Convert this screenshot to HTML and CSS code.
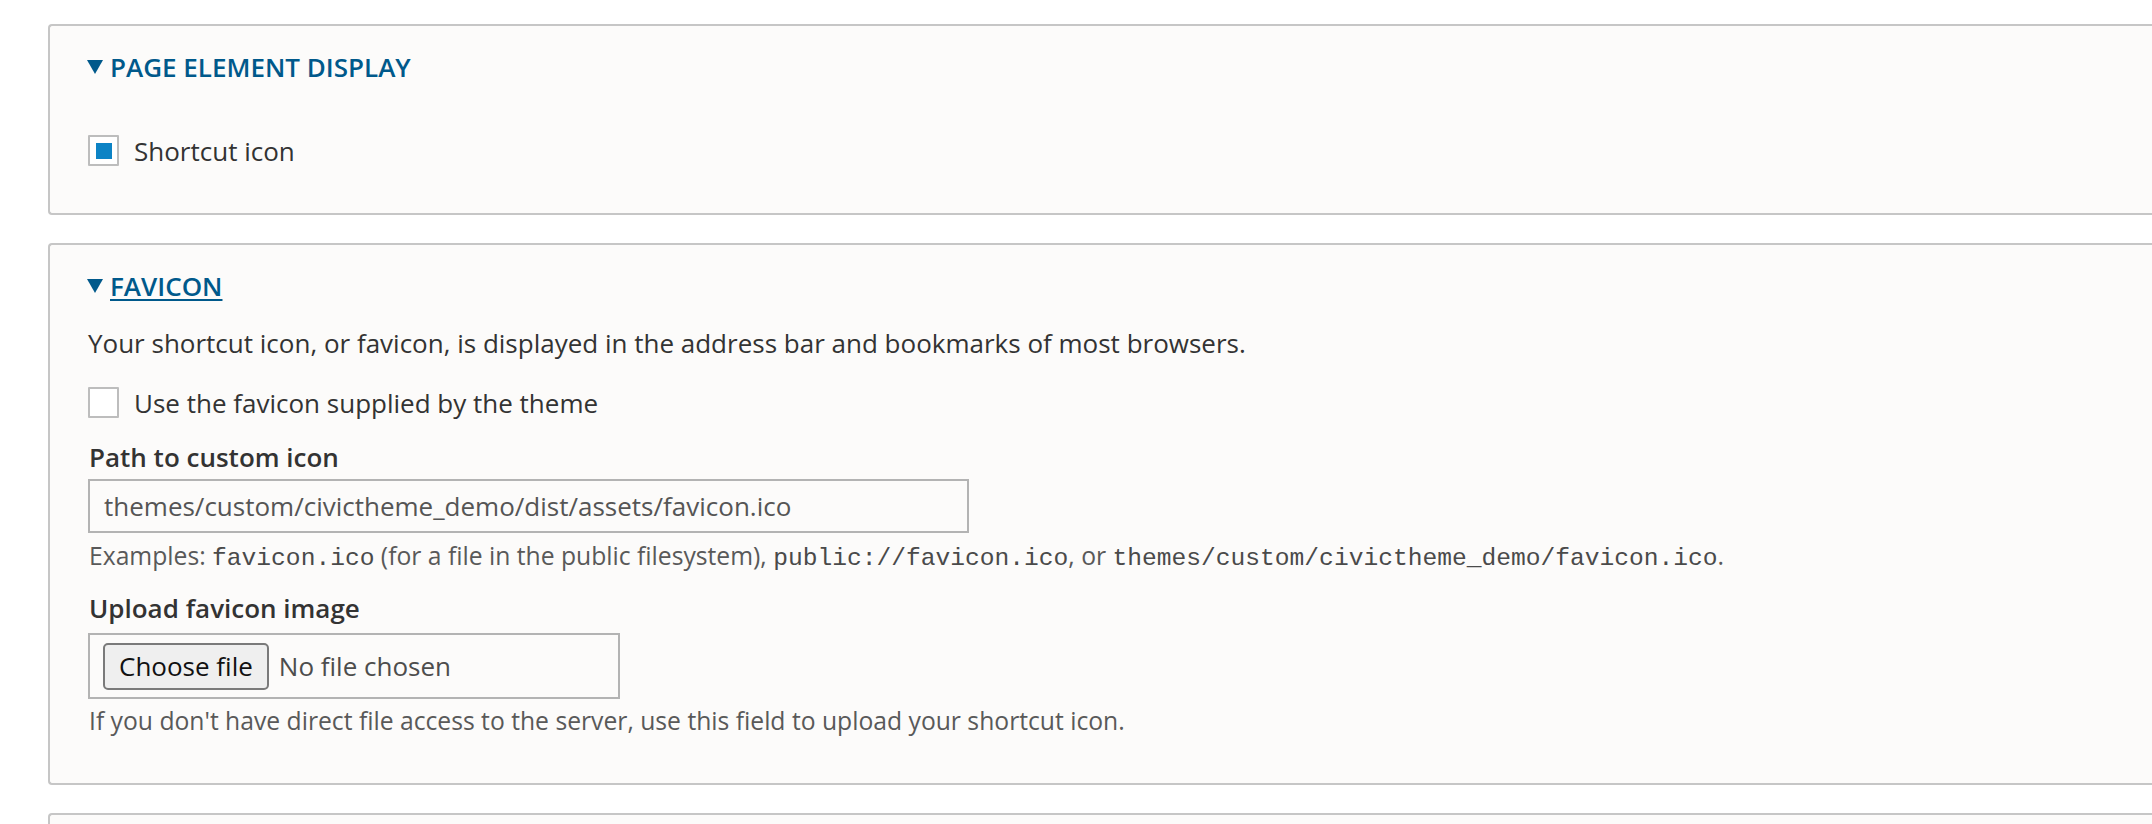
FILE: index.html
```html
<!DOCTYPE html>
<html lang="en">
<head>
<meta charset="utf-8">
<title>Theme settings – Favicon</title>
<link rel="stylesheet" href="styles.css">
</head>
<body>
<main class="page">
  <section class="panel panel--display">
    <h2 class="panel-title">
      <svg class="caret" width="16" height="14" viewBox="0 0 16 14" aria-hidden="true"><polygon points="0,0 16,0 8,14"/></svg>
      <span class="panel-title-text">Page element display</span>
    </h2>
    <div class="check-row">
      <input class="checkbox" type="checkbox" id="toggle-favicon" checked>
      <label class="check-label" for="toggle-favicon">Shortcut icon</label>
    </div>
  </section>

  <section class="panel panel--favicon">
    <h2 class="panel-title">
      <svg class="caret" width="16" height="14" viewBox="0 0 16 14" aria-hidden="true"><polygon points="0,0 16,0 8,14"/></svg>
      <a class="panel-title-text panel-title-link" href="#favicon">Favicon</a>
    </h2>
    <p class="panel-desc">Your shortcut icon, or favicon, is displayed in the address bar and bookmarks of most browsers.</p>
    <div class="check-row check-row--spaced">
      <input class="checkbox" type="checkbox" id="default-favicon">
      <label class="check-label" for="default-favicon">Use the favicon supplied by the theme</label>
    </div>

    <div class="field field--path">
      <label class="field-label" for="favicon-path">Path to custom icon</label>
      <input class="text-input" type="text" id="favicon-path" value="themes/custom/civictheme_demo/dist/assets/favicon.ico">
      <p class="field-desc">Examples: <code>favicon.ico</code> (for a file in the public filesystem), <code>public://favicon.ico</code>, or <code>themes/custom/civictheme_demo/favicon.ico</code>.</p>
    </div>

    <div class="field field--upload">
      <span class="field-label">Upload favicon image</span>
      <div class="file-box">
        <button class="file-btn" type="button">Choose file</button>
        <span class="file-status">No file chosen</span>
      </div>
      <p class="field-desc">If you don't have direct file access to the server, use this field to upload your shortcut icon.</p>
    </div>
  </section>

  <section class="panel panel--next"></section>
</main>
</body>
</html>
```

FILE: styles.css
```css
html, body {
  margin: 0;
  padding: 0;
  background: #ffffff;
  overflow: hidden;
}

body {
  font-family: "Open Sans", "Noto Sans", "Liberation Sans", sans-serif;
  font-size: 26px;
  line-height: 36px;
  color: #333333;
}

.page {
  display: flex;
  flex-direction: column;
  gap: 28px;
  padding: 24px 0 0 48px;
}

.panel {
  background: #fcfbfa;
  border: 2px solid #c6c6c6;
  border-right: none;
  border-radius: 4px 0 0 4px;
  margin-right: -10px;
  padding: 23px 0 0 38px;
}

.panel--display {
  padding-bottom: 47px;
}

.panel--favicon {
  padding-bottom: 46px;
}

.panel--next {
  height: 120px;
}

.panel-title {
  margin: 0;
  display: flex;
  align-items: baseline;
  gap: 7px;
  font-size: 26px;
  line-height: 36px;
  font-weight: 600;
  text-transform: uppercase;
  color: #00598b;
}

.caret {
  fill: #00598b;
  flex: none;
  position: relative;
  top: -2px;
  align-self: flex-end;
  margin-bottom: 9px;
  margin-left: -1px;
}

.panel-title-link {
  color: #00598b;
  text-decoration: underline;
  text-decoration-thickness: 2px;
  text-underline-offset: 3px;
}

.check-row {
  display: flex;
  align-items: center;
  gap: 15px;
  height: 31px;
  margin-top: 50px;
}

.check-row--spaced {
  margin-top: 26px;
}

.checkbox {
  appearance: none;
  -webkit-appearance: none;
  margin: 0;
  width: 31px;
  height: 31px;
  border: 2px solid #bdbdbd;
  border-radius: 1px;
  background-color: #ffffff;
  flex: none;
}

.checkbox:checked {
  background-image: linear-gradient(#0c83c5, #0c83c5);
  background-size: 16px 16px;
  background-position: center;
  background-repeat: no-repeat;
}

.check-label {
  color: #333333;
}

.panel-desc {
  margin: 21px 0 0;
  color: #333333;
}

.field {
  display: flex;
  flex-direction: column;
  align-items: flex-start;
}

.field--path {
  margin-top: 21px;
}

.field--upload {
  margin-top: 18px;
}

.field-label {
  font-weight: 600;
  color: #333333;
  margin-left: 1px;
}

.text-input {
  box-sizing: border-box;
  margin: 4px 0 0;
  width: 881px;
  height: 54px;
  padding: 0 14px;
  border: 2px solid #b3b3b3;
  border-radius: 0;
  background: #fcfbfa;
  font-family: inherit;
  font-size: 26px;
  color: #555555;
  outline: none;
}

.field-desc {
  margin: 7px 0 0 1px;
  font-size: 24.7px;
  line-height: 32px;
  color: #595959;
}

.field-desc code {
  font-family: "Liberation Mono", "DejaVu Sans Mono", monospace;
  font-size: 24.6px;
  line-height: 1;
  color: #4a4a4a;
}

.file-box {
  box-sizing: border-box;
  margin-top: 7px;
  width: 532px;
  height: 66px;
  border: 2px solid #b3b3b3;
  display: flex;
  align-items: center;
  padding-left: 13px;
}

.file-btn {
  box-sizing: border-box;
  height: 47px;
  padding: 0 14px;
  border: 2px solid #7a7a7a;
  border-radius: 5px;
  background: #efefef;
  font-family: inherit;
  font-size: 26px;
  color: #111111;
}

.file-status {
  margin-left: 10px;
  color: #4d4d4d;
}

.field--upload .field-desc {
  margin-top: 6px;
}
```
